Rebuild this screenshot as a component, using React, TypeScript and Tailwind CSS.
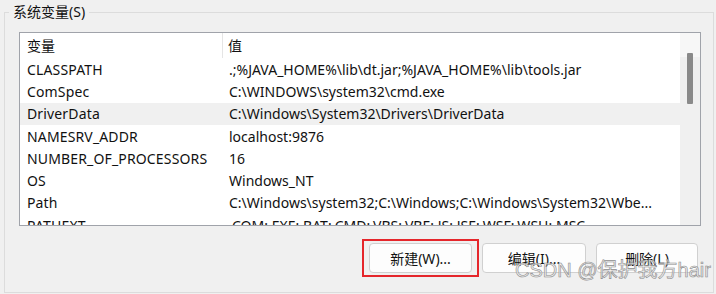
import React from "react";

const rows: [string, string][] = [
  ["CLASSPATH", ".;%JAVA_HOME%\\lib\\dt.jar;%JAVA_HOME%\\lib\\tools.jar"],
  ["ComSpec", "C:\\WINDOWS\\system32\\cmd.exe"],
  ["DriverData", "C:\\Windows\\System32\\Drivers\\DriverData"],
  ["NAMESRV_ADDR", "localhost:9876"],
  ["NUMBER_OF_PROCESSORS", "16"],
  ["OS", "Windows_NT"],
  ["Path", "C:\\Windows\\system32;C:\\Windows;C:\\Windows\\System32\\Wbe..."],
  ["PATHEXT", ".COM;.EXE;.BAT;.CMD;.VBS;.VBE;.JS;.JSE;.WSF;.WSH;.MSC"],
];

const font = "font-['Noto_Sans','Noto_Sans_CJK_SC',sans-serif]";

export default function App() {
  return (
    <div className={`relative w-[716px] h-[294px] overflow-hidden bg-[#f0f0f0] text-[14px] text-[#111] ${font}`}>
      <div className="relative ml-[4px] mt-[12px] w-[710px] h-[281px] border border-[#dcdcdc]">
        <div className="absolute left-[4px] top-[-11px] bg-[#f0f0f0] px-[4px] leading-[20px]">
          系统变量(S)
        </div>
        <div className="ml-[14px] mt-[19px] w-[682px] h-[194px] border border-[#a0a3aa] bg-white flex overflow-hidden">
          <div className="flex-1 flex flex-col overflow-hidden">
            <div className="flex h-[25px] items-center shrink-0">
              <div className="w-[203px] h-full pl-[7px] flex items-center border-r border-[#e5e5e5]">变量</div>
              <div className="pl-[5px]">值</div>
            </div>
            {rows.map(([k, v]) => (
              <div
                key={k}
                className={`flex h-[22.3px] shrink-0 items-center whitespace-nowrap ${k === "DriverData" ? "bg-[#f0f0f0]" : ""}`}
              >
                <div className="w-[203px] pl-[7px] tracking-[0.15px]">{k}</div>
                <div className="pl-[6px]">{v}</div>
              </div>
            ))}
          </div>
          <div className="w-[20px] shrink-0 bg-[#f0f0f0] relative">
            <div className="h-[24px] bg-[#f7f7f7]" />
            <div className="ml-[7px] mt-[-4px] w-[6px] h-[51px] bg-[#8a8a8a] rounded-[1px]" />
          </div>
        </div>
        <div className="flex items-center ml-[357px] mt-[13px]">
          <div className="border-2 border-[#e5262b] px-[5px] py-[2px]">
            <button className="w-[103px] h-[30px] rounded-[4px] border border-[#d0d0d0] bg-[#fdfdfd] flex items-center justify-center">
              新建(W)...
            </button>
          </div>
          <button className="ml-[3px] w-[104px] h-[30px] rounded-[4px] border border-[#d0d0d0] bg-[#fdfdfd] flex items-center justify-center">
            编辑(I)...
          </button>
          <button className="ml-[10px] w-[102px] h-[30px] rounded-[4px] border border-[#d0d0d0] bg-[#fdfdfd] flex items-center justify-center">
            删除(L)
          </button>
        </div>
      </div>
      <div className="absolute left-[515px] top-[256px] text-[20px] leading-[28px] whitespace-nowrap text-[rgba(235,235,235,0.7)] [-webkit-text-stroke:0.6px_#8c8c8c] font-['Liberation_Sans','Noto_Sans_CJK_SC',sans-serif]">
        CSDN @保护我方hair
      </div>
    </div>
  );
}
